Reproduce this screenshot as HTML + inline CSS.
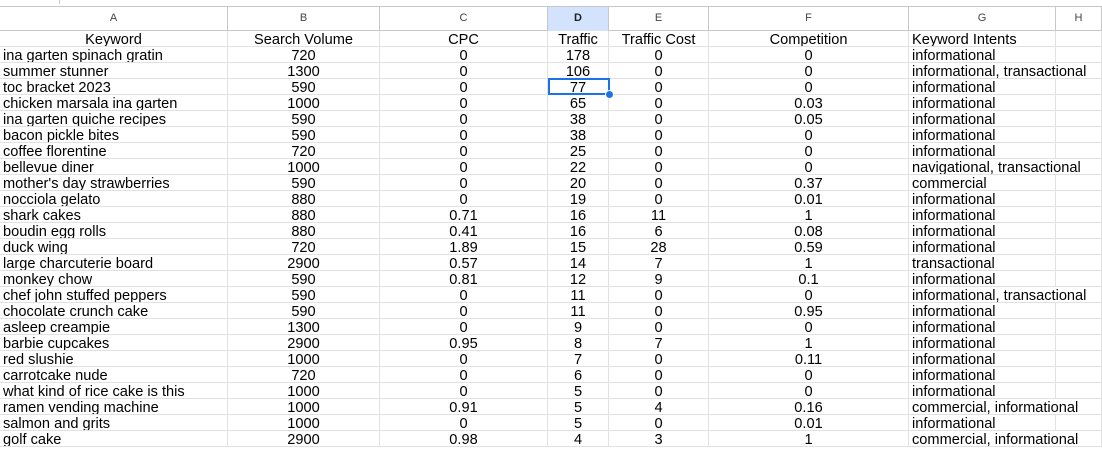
<!DOCTYPE html>
<html><head><meta charset="utf-8"><style>
*{margin:0;padding:0;box-sizing:border-box}
body{width:1102px;height:450px;overflow:hidden;background:#fff;font-family:"Liberation Sans",Arial,sans-serif;position:relative}
.top{position:absolute;left:0;top:6px;width:1102px;height:1px;background:#c7c7c7}
.tick{position:absolute;left:59px;top:0;width:1px;height:4px;background:#c7c7c7}
.hdr{position:absolute;left:0;top:7px;height:24px;width:1102px;display:flex;border-bottom:1px solid #c7c7c7}
.hdr div{height:24px;line-height:23px;font-size:11px;color:#444;text-align:center;border-right:1px solid #c7c7c7;flex:none}
.hdr div.s{background:#d3e3fd;color:#1f1f1f;font-weight:bold}
.r{position:absolute;left:0;height:16px;width:1102px;display:flex;border-bottom:1px solid #e1e1e1;overflow:hidden}
.r div{height:16px;flex:none;border-right:1px solid #e1e1e1;font-size:14.6px;line-height:19px;padding:0 3px;white-space:nowrap;overflow:visible;color:#000}
.r div.c{text-align:center}
.r div.o{border-right-color:transparent}
.w1{width:228px}.w2{width:152px}.w3{width:168px}.w4{width:61px}.w5{width:100px}.w6{width:200px}.w7{width:147px}.w8{width:46px}
.sel{position:absolute;left:548px;top:78px;width:62px;height:17px;border:2px solid #1a73e8}
.dot{position:absolute;left:605px;top:90px;width:9px;height:9px;border-radius:50%;background:#1a73e8;border:1px solid #fff}
</style></head><body>
<div class="tick"></div>
<div class="top"></div>
<div class="hdr"><div class="w1">A</div><div class="w2">B</div><div class="w3">C</div><div class="w4 s">D</div><div class="w5">E</div><div class="w6">F</div><div class="w7">G</div><div class="w8">H</div></div>
<div class="r" style="top:31px"><div class="w1 c">Keyword</div><div class="w2 c">Search Volume</div><div class="w3 c">CPC</div><div class="w4 c">Traffic</div><div class="w5 c">Traffic Cost</div><div class="w6 c">Competition</div><div class="w7">Keyword Intents</div><div class="w8"></div></div>
<div class="r" style="top:47px"><div class="w1">ina garten spinach gratin</div><div class="w2 c">720</div><div class="w3 c">0</div><div class="w4 c">178</div><div class="w5 c">0</div><div class="w6 c">0</div><div class="w7">informational</div><div class="w8"></div></div>
<div class="r" style="top:63px"><div class="w1">summer stunner</div><div class="w2 c">1300</div><div class="w3 c">0</div><div class="w4 c">106</div><div class="w5 c">0</div><div class="w6 c">0</div><div class="w7 o">informational, transactional</div><div class="w8"></div></div>
<div class="r" style="top:79px"><div class="w1">toc bracket 2023</div><div class="w2 c">590</div><div class="w3 c">0</div><div class="w4 c">77</div><div class="w5 c">0</div><div class="w6 c">0</div><div class="w7">informational</div><div class="w8"></div></div>
<div class="r" style="top:95px"><div class="w1">chicken marsala ina garten</div><div class="w2 c">1000</div><div class="w3 c">0</div><div class="w4 c">65</div><div class="w5 c">0</div><div class="w6 c">0.03</div><div class="w7">informational</div><div class="w8"></div></div>
<div class="r" style="top:111px"><div class="w1">ina garten quiche recipes</div><div class="w2 c">590</div><div class="w3 c">0</div><div class="w4 c">38</div><div class="w5 c">0</div><div class="w6 c">0.05</div><div class="w7">informational</div><div class="w8"></div></div>
<div class="r" style="top:127px"><div class="w1">bacon pickle bites</div><div class="w2 c">590</div><div class="w3 c">0</div><div class="w4 c">38</div><div class="w5 c">0</div><div class="w6 c">0</div><div class="w7">informational</div><div class="w8"></div></div>
<div class="r" style="top:143px"><div class="w1">coffee florentine</div><div class="w2 c">720</div><div class="w3 c">0</div><div class="w4 c">25</div><div class="w5 c">0</div><div class="w6 c">0</div><div class="w7">informational</div><div class="w8"></div></div>
<div class="r" style="top:159px"><div class="w1">bellevue diner</div><div class="w2 c">1000</div><div class="w3 c">0</div><div class="w4 c">22</div><div class="w5 c">0</div><div class="w6 c">0</div><div class="w7 o">navigational, transactional</div><div class="w8"></div></div>
<div class="r" style="top:175px"><div class="w1">mother's day strawberries</div><div class="w2 c">590</div><div class="w3 c">0</div><div class="w4 c">20</div><div class="w5 c">0</div><div class="w6 c">0.37</div><div class="w7">commercial</div><div class="w8"></div></div>
<div class="r" style="top:191px"><div class="w1">nocciola gelato</div><div class="w2 c">880</div><div class="w3 c">0</div><div class="w4 c">19</div><div class="w5 c">0</div><div class="w6 c">0.01</div><div class="w7">informational</div><div class="w8"></div></div>
<div class="r" style="top:207px"><div class="w1">shark cakes</div><div class="w2 c">880</div><div class="w3 c">0.71</div><div class="w4 c">16</div><div class="w5 c">11</div><div class="w6 c">1</div><div class="w7">informational</div><div class="w8"></div></div>
<div class="r" style="top:223px"><div class="w1">boudin egg rolls</div><div class="w2 c">880</div><div class="w3 c">0.41</div><div class="w4 c">16</div><div class="w5 c">6</div><div class="w6 c">0.08</div><div class="w7">informational</div><div class="w8"></div></div>
<div class="r" style="top:239px"><div class="w1">duck wing</div><div class="w2 c">720</div><div class="w3 c">1.89</div><div class="w4 c">15</div><div class="w5 c">28</div><div class="w6 c">0.59</div><div class="w7">informational</div><div class="w8"></div></div>
<div class="r" style="top:255px"><div class="w1">large charcuterie board</div><div class="w2 c">2900</div><div class="w3 c">0.57</div><div class="w4 c">14</div><div class="w5 c">7</div><div class="w6 c">1</div><div class="w7">transactional</div><div class="w8"></div></div>
<div class="r" style="top:271px"><div class="w1">monkey chow</div><div class="w2 c">590</div><div class="w3 c">0.81</div><div class="w4 c">12</div><div class="w5 c">9</div><div class="w6 c">0.1</div><div class="w7">informational</div><div class="w8"></div></div>
<div class="r" style="top:287px"><div class="w1">chef john stuffed peppers</div><div class="w2 c">590</div><div class="w3 c">0</div><div class="w4 c">11</div><div class="w5 c">0</div><div class="w6 c">0</div><div class="w7 o">informational, transactional</div><div class="w8"></div></div>
<div class="r" style="top:303px"><div class="w1">chocolate crunch cake</div><div class="w2 c">590</div><div class="w3 c">0</div><div class="w4 c">11</div><div class="w5 c">0</div><div class="w6 c">0.95</div><div class="w7">informational</div><div class="w8"></div></div>
<div class="r" style="top:319px"><div class="w1">asleep creampie</div><div class="w2 c">1300</div><div class="w3 c">0</div><div class="w4 c">9</div><div class="w5 c">0</div><div class="w6 c">0</div><div class="w7">informational</div><div class="w8"></div></div>
<div class="r" style="top:335px"><div class="w1">barbie cupcakes</div><div class="w2 c">2900</div><div class="w3 c">0.95</div><div class="w4 c">8</div><div class="w5 c">7</div><div class="w6 c">1</div><div class="w7">informational</div><div class="w8"></div></div>
<div class="r" style="top:351px"><div class="w1">red slushie</div><div class="w2 c">1000</div><div class="w3 c">0</div><div class="w4 c">7</div><div class="w5 c">0</div><div class="w6 c">0.11</div><div class="w7">informational</div><div class="w8"></div></div>
<div class="r" style="top:367px"><div class="w1">carrotcake nude</div><div class="w2 c">720</div><div class="w3 c">0</div><div class="w4 c">6</div><div class="w5 c">0</div><div class="w6 c">0</div><div class="w7">informational</div><div class="w8"></div></div>
<div class="r" style="top:383px"><div class="w1">what kind of rice cake is this</div><div class="w2 c">1000</div><div class="w3 c">0</div><div class="w4 c">5</div><div class="w5 c">0</div><div class="w6 c">0</div><div class="w7">informational</div><div class="w8"></div></div>
<div class="r" style="top:399px"><div class="w1">ramen vending machine</div><div class="w2 c">1000</div><div class="w3 c">0.91</div><div class="w4 c">5</div><div class="w5 c">4</div><div class="w6 c">0.16</div><div class="w7 o">commercial, informational</div><div class="w8"></div></div>
<div class="r" style="top:415px"><div class="w1">salmon and grits</div><div class="w2 c">1000</div><div class="w3 c">0</div><div class="w4 c">5</div><div class="w5 c">0</div><div class="w6 c">0.01</div><div class="w7">informational</div><div class="w8"></div></div>
<div class="r" style="top:431px"><div class="w1">golf cake</div><div class="w2 c">2900</div><div class="w3 c">0.98</div><div class="w4 c">4</div><div class="w5 c">3</div><div class="w6 c">1</div><div class="w7 o">commercial, informational</div><div class="w8"></div></div>
<div class="sel"></div>
<div class="dot"></div>
</body></html>
